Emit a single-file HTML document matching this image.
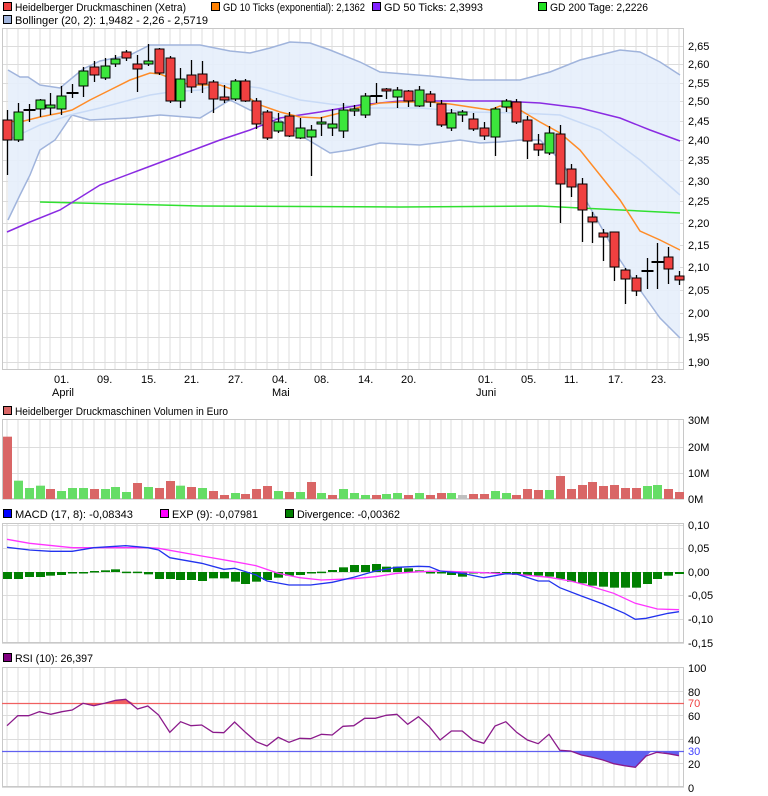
<!DOCTYPE html>
<html><head><meta charset="utf-8">
<style>
body{margin:0;background:#fff;width:768px;height:796px;overflow:hidden;font-family:"Liberation Sans",Arial,sans-serif}
svg{display:block}
text{font-family:"Liberation Sans",Arial,sans-serif;font-size:11px;fill:#000}
</style></head><body>
<svg id="s" width="768" height="796" xmlns="http://www.w3.org/2000/svg">
<g id="bg"></g>
<rect x="3.5" y="2.5" width="8" height="8" fill="#f04040" stroke="#000"/><text x="15" y="11" textLength="171" lengthAdjust="spacingAndGlyphs">Heidelberger Druckmaschinen (Xetra)</text>
<rect x="211.5" y="2.5" width="8" height="8" fill="#ff8000" stroke="#000"/><text x="223" y="11" textLength="142" lengthAdjust="spacingAndGlyphs">GD 10 Ticks (exponential): 2,1362</text>
<rect x="372.5" y="2.5" width="8" height="8" fill="#8020ff" stroke="#000"/><text x="384" y="11" textLength="99" lengthAdjust="spacingAndGlyphs">GD 50 Ticks: 2,3993</text>
<rect x="538.5" y="2.5" width="8" height="8" fill="#20e020" stroke="#000"/><text x="550" y="11" textLength="98" lengthAdjust="spacingAndGlyphs">GD 200 Tage: 2,2226</text>
<rect x="3.5" y="15.5" width="8" height="8" fill="#a0b4dc" stroke="#000"/><text x="15" y="24" textLength="193" lengthAdjust="spacingAndGlyphs">Bollinger (20, 2): 1,9482 - 2,26 - 2,5719</text>
<g id="ylab"></g>
<text x="54" y="383">01.</text><text x="97" y="383">09.</text><text x="141" y="383">15.</text><text x="184" y="383">21.</text><text x="228" y="383">27.</text><text x="272" y="383">04.</text><text x="314" y="383">08.</text><text x="358" y="383">14.</text><text x="401" y="383">20.</text><text x="478" y="383">01.</text><text x="521" y="383">05.</text><text x="564" y="383">11.</text><text x="608" y="383">17.</text><text x="651" y="383">23.</text>
<text x="52" y="396">April</text><text x="272" y="396">Mai</text><text x="476" y="396">Juni</text>
<rect x="3.5" y="406.5" width="8" height="8" fill="#d96666" stroke="#000"/><text x="15" y="415" textLength="213" lengthAdjust="spacingAndGlyphs">Heidelberger Druckmaschinen Volumen in Euro</text>
<text x="688" y="424">30M</text><text x="688" y="451">20M</text><text x="688" y="477">10M</text><text x="688" y="503">0M</text>
<rect x="3.5" y="509.5" width="8" height="8" fill="#0000ff" stroke="#000"/><text x="15" y="518" textLength="118" lengthAdjust="spacingAndGlyphs">MACD (17, 8): -0,08343</text>
<rect x="160.5" y="509.5" width="8" height="8" fill="#ff00ff" stroke="#000"/><text x="172" y="518" textLength="86" lengthAdjust="spacingAndGlyphs">EXP (9): -0,07981</text>
<rect x="285.5" y="509.5" width="8" height="8" fill="#008000" stroke="#000"/><text x="297" y="518" textLength="103" lengthAdjust="spacingAndGlyphs">Divergence: -0,00362</text>
<text x="688" y="529">0,10</text><text x="688" y="552">0,05</text><text x="688" y="576">0,00</text><text x="688" y="599">-0,05</text><text x="688" y="623">-0,10</text><text x="688" y="647">-0,15</text>
<rect x="3.5" y="653.5" width="8" height="8" fill="#800080" stroke="#000"/><text x="15" y="662" textLength="78" lengthAdjust="spacingAndGlyphs">RSI (10): 26,397</text>
<text x="688" y="672">100</text><text x="688" y="696">80</text><text x="688" y="707" style="fill:#f04040">70</text><text x="688" y="720">60</text><text x="688" y="744">40</text><text x="688" y="755" style="fill:#4040ff">30</text><text x="688" y="768">20</text><text x="688" y="792">0</text>
<g id="fg"></g>
</svg>
<script>
var NS="http://www.w3.org/2000/svg";
function el(p,t,a){var e=document.createElementNS(NS,t);for(var k in a)e.setAttribute(k,a[k]);p.appendChild(e);return e;}
var bg=document.getElementById('bg'),fg=document.getElementById('fg'),yl=document.getElementById('ylab');
function X(i){return 7+i*10.84;}
var L=2,R=684;
var panels=[[28,370],[419,499],[523,643],[667,787]];
panels.forEach(function(p){
 el(bg,'rect',{x:L,y:p[0],width:R-L,height:p[1]-p[0],fill:'#fff'});
 for(var i=0;i<63;i++){el(bg,'line',{x1:X(i)+0.5|0,x2:X(i)+0.5|0,y1:p[0],y2:p[1],stroke:'#dcdcdc'});}
});
function PY(p){return 971.7-949.8*Math.log(p);}
for(var k=0;k<16;k++){var p=1.90+k*0.05,y=Math.round(PY(p));
 el(bg,'line',{x1:L,x2:R,y1:y+.5,y2:y+.5,stroke:'#dcdcdc'});
 var t=el(yl,'text',{x:688,y:y+4});t.textContent=p.toFixed(2).replace('.',',');}
[419,447,473,499].forEach(function(y){el(bg,'line',{x1:L,x2:R,y1:y+.5,y2:y+.5,stroke:'#dcdcdc'});});
[525,548,572,595,619,643].forEach(function(y){el(bg,'line',{x1:L,x2:R,y1:y+.5,y2:y+.5,stroke:'#dcdcdc'});});
[667,691,715,739,763,787].forEach(function(y){el(bg,'line',{x1:L,x2:R,y1:y+.5,y2:y+.5,stroke:'#dcdcdc'});});
panels.forEach(function(p){el(bg,'rect',{x:L+.5,y:p[0]+.5,width:R-L-1,height:p[1]-p[0]-1,fill:'none',stroke:'#c8c8c8'});});
var up=[[8,70],[20,77],[28,77],[40,85],[60,88],[83,69],[100,61],[130,55],[150,45],[160,45],[200,45],[230,51],[250,53],[270,48],[290,42],[310,43],[330,50],[360,62],[380,72],[430,76],[470,80],[520,80],[550,72],[580,60],[620,50],[640,52],[660,62],[680,75]];
var lo=[[8,220],[20,195],[30,175],[40,150],[55,140],[72,115],[90,120],[130,118],[160,115],[200,118],[230,100],[250,110],[280,120],[300,135],[330,153],[350,150],[380,143],[420,145],[460,140],[480,143],[500,142],[520,140],[540,140],[560,160],[580,190],[600,225],[620,260],[640,290],[660,318],[680,338]];
var mid=[[8,140],[40,125],[70,115],[100,108],[130,100],[150,95],[170,92],[200,90],[220,83],[260,88],[300,100],[330,104],[370,108],[420,108],[470,112],[520,113],[560,115],[600,130],[640,160],[680,195]];
function pts(a){return a.map(function(q){return q[0]+','+q[1]}).join(' ');}
el(bg,'polygon',{points:pts(up)+' '+pts(lo.slice().reverse()),fill:'#e6eefb',opacity:'0.9'});
el(bg,'polyline',{points:pts(up),fill:'none',stroke:'#a0b4dc','stroke-width':1.5});
el(bg,'polyline',{points:pts(lo),fill:'none',stroke:'#a0b4dc','stroke-width':1.5});
el(bg,'polyline',{points:pts(mid),fill:'none',stroke:'#c8daf6','stroke-width':1.5});
el(bg,'polyline',{points:pts([[40,202],[200,206],[400,207],[540,206],[680,213]]),fill:'none',stroke:'#30e030','stroke-width':1.5});
el(bg,'polyline',{points:pts([[7,232],[30,222],[60,210],[100,185],[140,170],[180,155],[220,140],[250,130],[280,118],[320,112],[360,105],[400,101],[440,101],[500,101],[540,103],[580,108],[620,118],[650,130],[680,141]]),fill:'none',stroke:'#8a2be2','stroke-width':1.5});
el(bg,'polyline',{points:pts([[7,121],[20,122],[40,117],[60,113],[72,110],[90,100],[110,90],[130,80],[150,73],[160,74],[170,78],[190,85],[220,85],[240,92],[260,105],[280,112],[300,117],[320,118],[340,113],[360,107],[380,103],[400,102],[430,102],[450,104],[470,107],[490,110],[500,106],[520,110],[540,122],[560,133],[580,150],[600,175],[620,200],[640,231],[660,240],[680,250]]),fill:'none',stroke:'#ff8c28','stroke-width':1.5});
var C=[[120,140,110,175,'r'],[112,140,103,142,'g'],[110,110,104,122,'d'],[100,109,99,117,'g'],[105,108,93,115,'g'],[96,109,86,115,'g'],[93,93,84,98,'d'],[71,86,67,97,'g'],[67,75,61,82,'r'],[66,78,58,80,'g'],[59,64,55,67,'g'],[52,58,50,61,'r'],[64,69,55,92,'r'],[61,64,44,66,'g'],[49,73,48,75,'r'],[58,101,56,103,'r'],[79,101,68,108,'g'],[75,87,60,93,'r'],[74,84,61,93,'r'],[82,99,80,113,'r'],[97,100,85,103,'r'],
[81,99,79,101,'g'],[81,101,79,102,'r'],[101,124,98,129,'r'],[112,138,110,140,'r'],[122,131,113,133,'g'],[116,136,112,137,'r'],[128,138,118,139,'g'],[130,137,125,176,'g'],[122,124,117,136,'g'],[124,128,109,136,'g'],[110,131,103,138,'g'],[109,111,105,116,'g'],[96,115,93,118,'g'],[96,96,83,103,'d'],[89,91,88,99,'r'],[90,97,87,108,'g'],[91,101,90,107,'r'],[90,106,86,107,'g'],[94,102,91,107,'r'],[104,125,100,127,'r'],
[113,128,109,131,'g'],[112,115,110,122,'g'],[119,129,113,131,'r'],[128,136,122,140,'r'],[109,137,107,156,'g'],[101,107,99,112,'g'],[102,122,99,124,'r'],[120,141,116,159,'r'],[144,150,134,156,'r'],[133,153,126,155,'g'],[134,184,125,223,'r'],[169,187,164,197,'r'],[184,210,178,242,'r'],[217,222,212,243,'r'],[233,237,229,261,'r'],[232,267,232,281,'r'],[270,279,268,304,'r'],[278,291,275,296,'r'],[271,271,258,289,'d'],[262,262,243,289,'d'],[257,269,247,284,'r'],[276,280,271,285,'r']];
C.forEach(function(c,i){var x=Math.round(X(i))+.5;
 el(fg,'line',{x1:x,x2:x,y1:c[2],y2:c[3],stroke:'#000','stroke-width':1.3});
 if(c[4]=='d'){el(fg,'line',{x1:x-6,x2:x+6,y1:c[0],y2:c[0],stroke:'#000','stroke-width':2});}
 else{var h=Math.max(c[1]-c[0],2);el(fg,'rect',{x:x-4.5,y:c[0],width:9,height:h,fill:c[4]=='g'?'#3ce63c':'#f04040',stroke:'#000','stroke-width':1});}
});
var V=[[125,'r'],[257,'g'],[279,'g'],[272,'g'],[282,'r'],[288,'g'],[279,'g'],[279,'g'],[282,'r'],[282,'g'],[276,'g'],[291,'g'],[264,'r'],[276,'g'],[279,'r'],[258,'r'],[272,'g'],[276,'r'],[279,'g'],[288,'r'],[300,'r'],[294,'g'],[297,'r'],[282,'r'],[273,'r'],[288,'g'],[291,'r'],[291,'g'],[261,'r'],[294,'g'],[300,'r'],[282,'g'],[294,'g'],[300,'g'],[300,'r'],[297,'g'],[294,'g'],[300,'r'],[294,'g'],[300,'r'],[294,'r'],[294,'g'],[300,'x'],[297,'r'],[297,'r'],[288,'g'],[294,'g'],[300,'r'],[282,'r'],[285,'r'],[285,'g'],[243,'r'],[282,'r'],[270,'r'],[261,'r'],[273,'r'],[270,'r'],[279,'r'],[279,'r'],[273,'g'],[270,'g'],[282,'r'],[291,'r']];
V.forEach(function(v,i){var x=Math.round(X(i));var y=395+v[0]/3;
 el(fg,'rect',{x:x-4,y:y,width:9,height:499-y,fill:v[1]=='g'?'#66dd66':v[1]=='r'?'#d96666':'#c0c0c0'});});
var D=[222,222,216,216,212,210,205,201,198,196,193,200,200,208,222,222,225,225,228,220,220,230,237,230,225,218,212,210,204,200,195,187,180,180,177,185,185,190,196,203,205,210,215,205,203,203,203,210,212,212,215,222,230,235,242,245,248,248,248,237,222,212,207];
D.forEach(function(z,i){var x=Math.round(X(i));var y=505+z/3;var y0=Math.min(y,572),h=Math.max(Math.abs(y-572),1.5);
 el(fg,'rect',{x:x-4,y:y0,width:9,height:h,fill:'#008000'});});
function zx(z){return 7+(z-14)*0.4905;}
function zp(a,off){return a.map(function(q){return zx(q[0]).toFixed(1)+','+(off+q[1]/3).toFixed(1)}).join(' ');}
el(fg,'polyline',{points:zp([[14,103],[60,115],[147,128],[191,128],[301,128],[323,130],[411,153],[478,170],[522,182],[567,205],[611,218],[655,225],[721,221],[765,215],[809,205],[853,200],[897,198],[986,203],[1053,208],[1119,217],[1163,228],[1207,245],[1251,265],[1295,295],[1340,312],[1384,314]],505),fill:'none',stroke:'#ff33ff','stroke-width':1.3});
el(fg,'polyline',{points:zp([[14,127],[60,135],[103,139],[147,139],[191,128],[256,122],[301,128],[323,135],[346,158],[411,175],[456,193],[478,190],[522,210],[544,228],[589,240],[633,240],[677,232],[721,217],[765,198],[809,187],[853,184],[875,185],[897,198],[942,205],[986,218],[1031,206],[1053,207],[1097,228],[1119,228],[1141,248],[1185,273],[1229,297],[1273,325],[1295,343],[1317,340],[1362,325],[1384,320]],505),fill:'none',stroke:'#2233ee','stroke-width':1.3});
var RS=[[14,242],[36,212],[58,212],[80,200],[103,208],[126,200],[147,195],[169,175],[191,182],[213,175],[236,166],[256,163],[280,192],[301,183],[323,210],[346,262],[368,230],[389,242],[411,240],[434,262],[456,263],[478,231],[500,262],[522,290],[544,303],[567,277],[589,292],[611,280],[633,281],[655,268],[677,270],[699,244],[721,242],[743,220],[765,220],[787,211],[809,208],[831,238],[853,215],[875,245],[897,285],[920,258],[942,258],[964,285],[986,295],[1009,243],[1031,230],[1053,262],[1075,285],[1097,296],[1119,268],[1141,316],[1163,318],[1185,330],[1207,337],[1229,345],[1251,356],[1273,362],[1295,367],[1317,333],[1339,322],[1362,326],[1384,332]];
el(fg,'polygon',{points:zp([[169,175],[191,182],[213,175],[236,166],[256,163],[272,175]],645),fill:'#f06060'});
el(fg,'polygon',{points:zp([[1150,319],[1163,318],[1185,330],[1207,337],[1229,345],[1251,356],[1273,362],[1295,367],[1317,333],[1328,319]],645),fill:'#6060f0'});
el(fg,'polygon',{points:zp([[1345,319],[1362,326],[1384,332],[1384,319]],645),fill:'#6060f0'});
el(fg,'line',{x1:L,x2:R,y1:703.5,y2:703.5,stroke:'#f06060','stroke-width':1.2});
el(fg,'line',{x1:L,x2:R,y1:751.5,y2:751.5,stroke:'#6060f0','stroke-width':1.2});
el(fg,'polyline',{points:zp(RS,645),fill:'none',stroke:'#8b1a8b','stroke-width':1.3});
</script>
</body></html>
